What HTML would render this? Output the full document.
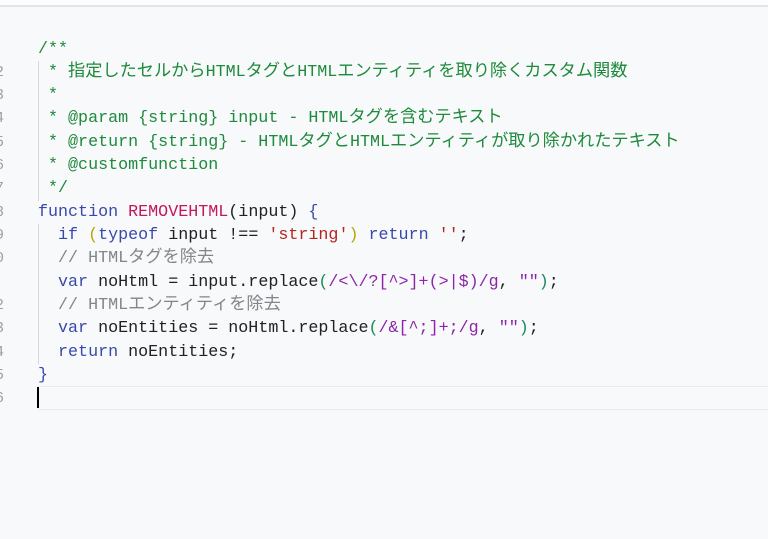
<!DOCTYPE html>
<html><head><meta charset="utf-8"><style>
html,body{margin:0;padding:0;}
body{width:768px;height:539px;background:#f8f9fa;position:relative;overflow:hidden;font-family:"Liberation Mono","Noto Sans CJK JP",monospace;font-size:16.7px;color:#202124;}
.top{position:absolute;left:0;top:0;width:768px;height:5px;background:#fdfdfd;border-bottom:2px solid #e3e5e8;}
.l{position:absolute;left:38px;height:23px;line-height:23px;white-space:pre;}
.n{position:absolute;left:-8px;width:12px;text-align:right;height:23px;line-height:23px;color:#9aa0a6;font-size:15px;}
.c{color:#1e8a3c;}
.k{color:#3949ab;}
.f{color:#c2185b;}
.s{color:#b3261e;}
.r{color:#8e24aa;}
.p1{color:#b8a800;}
.p2{color:#1b8a5a;}
.g{color:#80868b;}
.j{font-size:17.2px;}
.guide{position:absolute;left:38px;width:1px;background:#d6d8db;}
.cur{position:absolute;left:38px;top:386px;width:730px;height:22px;border-top:1px solid #e8eaed;border-bottom:1px solid #e8eaed;}
.caret{position:absolute;left:37px;top:387px;width:2px;height:21px;background:#000;}
</style></head><body>
<div class="top"></div>
<div class="guide" style="top:61px;height:140px"></div>
<div class="guide" style="top:224px;height:140px"></div>
<div class="cur"></div><div class="caret"></div>
<div class="n" style="top:61px">2</div><div class="n" style="top:84px">3</div><div class="n" style="top:107px">4</div><div class="n" style="top:131px">5</div><div class="n" style="top:154px">6</div><div class="n" style="top:177px">7</div><div class="n" style="top:201px">8</div><div class="n" style="top:224px">9</div><div class="n" style="top:247px">0</div><div class="n" style="top:294px">2</div><div class="n" style="top:317px">3</div><div class="n" style="top:341px">4</div><div class="n" style="top:364px">5</div><div class="n" style="top:387px">6</div>
<div class="l c" style="top:38px">/**</div>
<div class="l c" style="top:61px"> * <span class="j">指定したセルから</span>HTML<span class="j">タグと</span>HTML<span class="j">エンティティを取り除くカスタム関数</span></div>
<div class="l c" style="top:84px"> *</div>
<div class="l c" style="top:107px"> * @param {string} input - HTML<span class="j">タグを含むテキスト</span></div>
<div class="l c" style="top:131px"> * @return {string} - HTML<span class="j">タグと</span>HTML<span class="j">エンティティが取り除かれたテキスト</span></div>
<div class="l c" style="top:154px"> * @customfunction</div>
<div class="l c" style="top:177px"> */</div>
<div class="l" style="top:201px"><span class="k">function</span> <span class="f">REMOVEHTML</span>(input) <span class="k">{</span></div>
<div class="l" style="top:224px">  <span class="k">if</span> <span class="p1">(</span><span class="k">typeof</span> input !== <span class="s">'string'</span><span class="p1">)</span> <span class="k">return</span> <span class="s">''</span>;</div>
<div class="l g" style="top:247px">  // HTML<span class="j">タグを除去</span></div>
<div class="l" style="top:271px">  <span class="k">var</span> noHtml = input.replace<span class="p2">(</span><span class="r">/&lt;\/?[^&gt;]+(&gt;|$)/g</span>, <span class="r">""</span><span class="p2">)</span>;</div>
<div class="l g" style="top:294px">  // HTML<span class="j">エンティティを除去</span></div>
<div class="l" style="top:317px">  <span class="k">var</span> noEntities = noHtml.replace<span class="p2">(</span><span class="r">/&amp;[^;]+;/g</span>, <span class="r">""</span><span class="p2">)</span>;</div>
<div class="l" style="top:341px">  <span class="k">return</span> noEntities;</div>
<div class="l k" style="top:364px">}</div>
</body></html>
